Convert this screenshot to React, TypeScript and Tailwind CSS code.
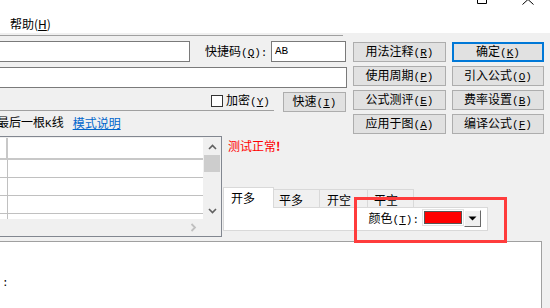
const Mono = ({ children }: { children: React.ReactNode }) => (
	<span className="font-['Liberation_Mono',monospace] text-[11px]">{children}</span>
);

const Acc = ({ text, k }: { text: string; k: string }): JSX.Element => (
	<span className="whitespace-nowrap">
		{text}
		<Mono>
			(<span className="underline">{k}</span>)
		</Mono>
	</span>
);

const Btn = ({ text, k, active = false, w = 'w-[93px]' }: { text: string; k: string; active?: boolean; w?: string }) => (
	<div
		className={`${w} h-[20px] flex items-center justify-center bg-[#e1e1e1] ${
			active ? 'border-2 border-[#0078d7]' : 'border border-[#adadad]'
		}`}
	>
		<Acc text={text} k={k} />
	</div>
);

const Chevron = ({ up }: { up: boolean }) => (
	<svg width="9" height="6" viewBox="0 0 9 6">
		<polyline
			points={up ? '1,5 4.5,1.5 8,5' : '1,1 4.5,4.5 8,1'}
			fill="none"
			stroke="#606060"
			strokeWidth="1.6"
		/>
	</svg>
);

export default function App() {
	return (
		<div className="relative w-[550px] h-[308px] overflow-hidden bg-[#f0f0f0] flex flex-col text-[12px] leading-none text-black font-['Noto_Sans_CJK_SC',sans-serif]">
			{/* title + menu */}
			<div className="h-[33px] bg-white flex flex-col shrink-0">
				<div className="h-[17px] flex justify-end items-start pr-[16px] gap-[34px]">
					<svg width="11" height="5" viewBox="0 0 11 5">
						<path d="M0.5 0 V3.5 H9.5 V0" fill="none" stroke="#000" strokeWidth="1" />
					</svg>
					<svg width="12" height="5" viewBox="0 0 12 5">
						<path d="M0.5 4.5 L6 -0.5 L11.5 4.5" fill="none" stroke="#000" strokeWidth="1" />
					</svg>
				</div>
				<div className="pl-[10px] h-[14px] leading-[14px]">
					<span className="whitespace-nowrap">
						帮助(<span className="underline">H</span>)
					</span>
				</div>
			</div>
			<div className="mt-[2px] h-px w-[343px] bg-[#a0a0a0] shrink-0" />

			{/* form rows + buttons */}
			<div className="flex mt-[5px] shrink-0">
				<div className="w-[353px] flex flex-col">
					<div className="flex items-center h-[21px]">
						<div className="-ml-[2px] w-[192px] h-[21px] bg-white border border-[#7a7a7a]" />
						<div className="ml-[15px] w-[66px] whitespace-nowrap">
							<Acc text="快捷码" k="Q" />
							<Mono>:</Mono>
						</div>
						<div className="w-[75px] h-[21px] bg-white border border-[#7a7a7a] flex items-center pl-[3px]">
							<Mono>AB</Mono>
						</div>
					</div>
					<div className="mt-[5px] -ml-[2px] w-[349px] h-[21px] bg-white border border-[#7a7a7a]" />
					<div className="mt-[4px] flex items-start h-[20px]">
						<div className="w-[274px] h-[19px] border-b border-[#a0a0a0] flex items-center pl-[211px] gap-[3px]">
							<div className="w-[12px] h-[12px] bg-white border border-[#333]" />
							<Acc text="加密" k="Y" />
						</div>
						<div className="ml-[9px]">
							<Btn text="快速" k="I" w="w-[63px]" />
						</div>
					</div>
					<div className="mt-[4px] flex items-center h-[14px] whitespace-nowrap -ml-[3px]">
						<span>
							最后一根<Mono>K</Mono>线
						</span>
						<span className="ml-[9px] text-[#0066cc] underline">模式说明</span>
					</div>
				</div>
				<div className="mt-[1px] grid grid-cols-[93px_92px] gap-x-[6px] gap-y-[4px]">
					<Btn text="用法注释" k="R" />
					<Btn text="确定" k="K" active w="w-[92px]" />
					<Btn text="使用周期" k="P" />
					<Btn text="引入公式" k="O" w="w-[92px]" />
					<Btn text="公式测评" k="E" />
					<Btn text="费率设置" k="B" w="w-[92px]" />
					<Btn text="应用于图" k="A" />
					<Btn text="编译公式" k="F" w="w-[92px]" />
				</div>
			</div>

			{/* table + tabs */}
			<div className="flex mt-[2px] h-[101px] shrink-0">
				<div className="-ml-[2px] w-[224px] h-[101px] border border-[#828790] p-px flex flex-col">
					<div className="flex h-[81px]">
						<div className="w-[204px] bg-white flex flex-col">
							<div className="h-[22px] border-b-2 border-[#c8c8c8] flex">
								<div className="w-[8px] border-r-2 border-[#c8c8c8]" />
							</div>
							{[0, 1, 2].map((i) => (
								<div key={i} className="h-[18px] border-b border-[#c0c0c0] flex">
									<div className="w-[8px] border-r border-[#c0c0c0]" />
								</div>
							))}
							<div className="flex-1 flex">
								<div className="w-[8px] border-r border-[#c0c0c0]" />
							</div>
						</div>
						<div className="w-[16px] flex flex-col ml-px">
							<div className="h-[17px] flex items-center justify-center">
								<Chevron up />
							</div>
							<div className="h-[17px] bg-[#cdcdcd]" />
							<div className="flex-1" />
							<div className="h-[17px] flex items-center justify-center">
								<Chevron up={false} />
							</div>
						</div>
					</div>
					<div className="h-[16px] flex items-center pl-[190px]">
						<svg width="7" height="9" viewBox="0 0 7 9">
							<polyline points="1.5,1 5,4.5 1.5,8" fill="none" stroke="#c0c0c0" strokeWidth="1.8" />
						</svg>
					</div>
				</div>
				<div className="ml-px flex flex-col">
					<div className="mt-[4px] pl-[5px] h-[12px] text-[#ff0000]">
						测试正常<span className="font-bold">!</span>
					</div>
					<div className="mt-[35px] flex items-end h-[20px]">
						<div className="relative z-10 w-[51px] h-[21px] -mb-px bg-white border border-b-0 border-[#d9d9d9] pl-[7px] pt-[4px]">
							开多
						</div>
						<div className="w-[46px] h-[18px] border border-l-0 border-b-0 border-[#d9d9d9] pl-[5px] pt-[4px]">
							平多
						</div>
						<div className="w-[48px] h-[18px] border border-l-0 border-b-0 border-[#d9d9d9] pl-[7px] pt-[4px]">
							开空
						</div>
						<div className="w-[46px] h-[18px] border border-l-0 border-b-0 border-[#d9d9d9] pl-[6px] pt-[4px]">
							平空
						</div>
					</div>
					<div className="w-[265px] h-[24px] bg-white border border-[#d9d9d9] flex justify-end items-start pt-px pr-[6px]">
						<div className="mt-[3px] mr-[3px] whitespace-nowrap">
							<Acc text="颜色" k="T" />
							<Mono>:</Mono>
						</div>
						<div className="w-[42px] h-[17px] bg-white border border-[#e3e3e3] p-px">
							<div className="w-full h-full bg-[#ff0000] border border-[#555]" />
						</div>
						<div className="mt-px w-[17px] h-[17px] bg-[#f0f0f0] border border-t-white border-l-white border-b-[#696969] border-r-[#696969] flex items-center justify-center">
							<svg width="9" height="5" viewBox="0 0 9 5">
								<polygon points="0.5,0.5 8.5,0.5 4.5,4.5" fill="#000" />
							</svg>
						</div>
					</div>
				</div>
			</div>

			{/* bottom editor */}
			<div className="mt-[4px] w-[542px] flex-1 bg-white border-t border-r border-[#a0a0a0] pl-[2px] pt-[33px]">
				<Mono>:</Mono>
			</div>

			{/* red annotation box */}
			<div className="absolute left-[354px] top-[197px] w-[153px] h-[46px] border-[3px] border-[#ff3c3c]" />
		</div>
	);
}
